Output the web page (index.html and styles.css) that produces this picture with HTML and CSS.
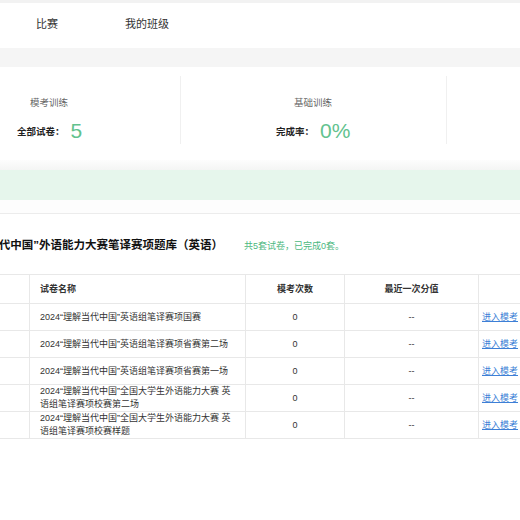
FILE: index.html
```html
<!DOCTYPE html>
<html lang="zh">
<head>
<meta charset="utf-8">
<link rel="stylesheet" href="styles.css">
</head>
<body>
<div class="topline"></div>
<nav class="nav">
  <a class="nav-item nav-first">比赛</a>
  <a class="nav-item">我的班级</a>
</nav>
<div class="band-gray"></div>
<section class="stats">
  <div class="stat stat-a">
    <div class="stat-label">模考训练</div>
    <div class="stat-row"><span class="stat-key">全部试卷：</span><span class="stat-val">5</span></div>
  </div>
  <div class="stat stat-b">
    <div class="stat-label">基础训练</div>
    <div class="stat-row"><span class="stat-key">完成率：</span><span class="stat-val">0%</span></div>
  </div>
  <div class="stat stat-c"></div>
</section>
<div class="band-fade"></div>
<div class="band-green"></div>
<div class="band-white"></div>
<section class="bank">
  <div class="bank-head">
    <div class="bank-title-box"><h2 class="bank-title">“理解当代中国”外语能力大赛笔译赛项题库（英语）</h2></div>
    <span class="bank-count">共5套试卷，已完成0套。</span>
  </div>
  <table class="papers">
    <colgroup>
      <col class="c-idx"><col class="c-name"><col class="c-times"><col class="c-score"><col class="c-op">
    </colgroup>
    <thead>
      <tr><th></th><th class="left">试卷名称</th><th>模考次数</th><th>最近一次分值</th><th></th></tr>
    </thead>
    <tbody>
      <tr><td></td><td class="left">2024“理解当代中国”英语组笔译赛项国赛</td><td>0</td><td>--</td><td class="op"><a>进入模考</a></td></tr>
      <tr><td></td><td class="left">2024“理解当代中国”英语组笔译赛项省赛第二场</td><td>0</td><td>--</td><td class="op"><a>进入模考</a></td></tr>
      <tr><td></td><td class="left">2024“理解当代中国”英语组笔译赛项省赛第一场</td><td>0</td><td>--</td><td class="op"><a>进入模考</a></td></tr>
      <tr><td></td><td class="left">2024“理解当代中国”全国大学生外语能力大赛 英语组笔译赛项校赛第二场</td><td>0</td><td>--</td><td class="op"><a>进入模考</a></td></tr>
      <tr><td></td><td class="left">2024“理解当代中国”全国大学生外语能力大赛 英语组笔译赛项校赛样题</td><td>0</td><td>--</td><td class="op"><a>进入模考</a></td></tr>
    </tbody>
  </table>
</section>
</body>
</html>
```

FILE: styles.css
```css
html, body {
  margin: 0;
  padding: 0;
  background: #fff;
  overflow: hidden;
  font-family: "Liberation Sans", "Noto Sans CJK SC", sans-serif;
  color: #333;
}
.topline {
  height: 3px;
  background: #f2f2f2;
}
.nav {
  height: 40px;
  padding-bottom: 5px;
  display: flex;
  align-items: center;
  font-size: 11px;
  color: #333;
}
.nav-item { display: block; }
.nav-first { margin-left: 36px; margin-right: 67px; }
.band-gray {
  height: 19px;
  background: #f5f5f5;
}
.stats {
  height: 93px;
  display: grid;
  grid-template-columns: 181px 266px 1fr;
  align-items: start;
}
.stat {
  height: 68px;
  margin-top: 9px;
  box-sizing: border-box;
  padding-top: 20px;
  display: flex;
  flex-direction: column;
  align-items: flex-start;
}
.stat-a, .stat-b { border-right: 1px solid #f0f0f0; }
.stat-a { padding-left: 17px; }
.stat-b { padding-left: 95px; }
.stat-label {
  font-size: 9.5px;
  color: #666;
  line-height: 14px;
}
.stat-row {
  display: flex;
  align-items: center;
  margin-top: 9px;
  height: 24px;
}
.stat-key {
  font-size: 9.5px;
  font-weight: bold;
  color: #222;
}
.stat-val {
  font-size: 21px;
  color: #62c28e;
  margin-left: 6px;
}
.stat-a .stat-label { margin-left: 13px; }
.stat-b .stat-label { margin-left: 18px; }
.band-fade {
  height: 10px;
  background: linear-gradient(#fdfdfd, #f4f5f4);
}
.band-green {
  height: 30px;
  background: #e6f6ec;
}
.band-white {
  height: 13px;
  background: #fdfdfd;
  border-bottom: 1px solid #ececec;
}
.bank-head {
  height: 60px;
  display: flex;
  align-items: center;
}
.bank-title-box {
  width: 223px;
  overflow: hidden;
  display: flex;
  justify-content: flex-end;
  white-space: nowrap;
}
.bank-title {
  margin: 0;
  font-size: 11.5px;
  font-weight: bold;
  color: #111;
  flex: none;
}
.bank-count {
  margin-left: 21px;
  font-size: 9px;
  color: #4cb880;
  padding-top: 3px;
}
.papers {
  border-collapse: collapse;
  table-layout: fixed;
  width: 600px;
  margin-left: -1px;
  font-size: 9px;
  color: #333;
}
.c-idx { width: 30px; }
.c-name { width: 216px; }
.c-times { width: 99px; }
.c-score { width: 134px; }
.c-op { width: 121px; }
.papers th, .papers td {
  border: 1px solid #e8e8e8;
  text-align: center;
  padding: 0 10px;
  line-height: 13px;
}
.papers th {
  height: 28px;
  font-weight: bold;
  color: #333;
}
.papers td { height: 26px; }
.papers .left { text-align: left; }
.papers td.op { text-align: left; padding-left: 3px; }
.op a {
  color: #3d7fd6;
  text-decoration: underline;
}
```
